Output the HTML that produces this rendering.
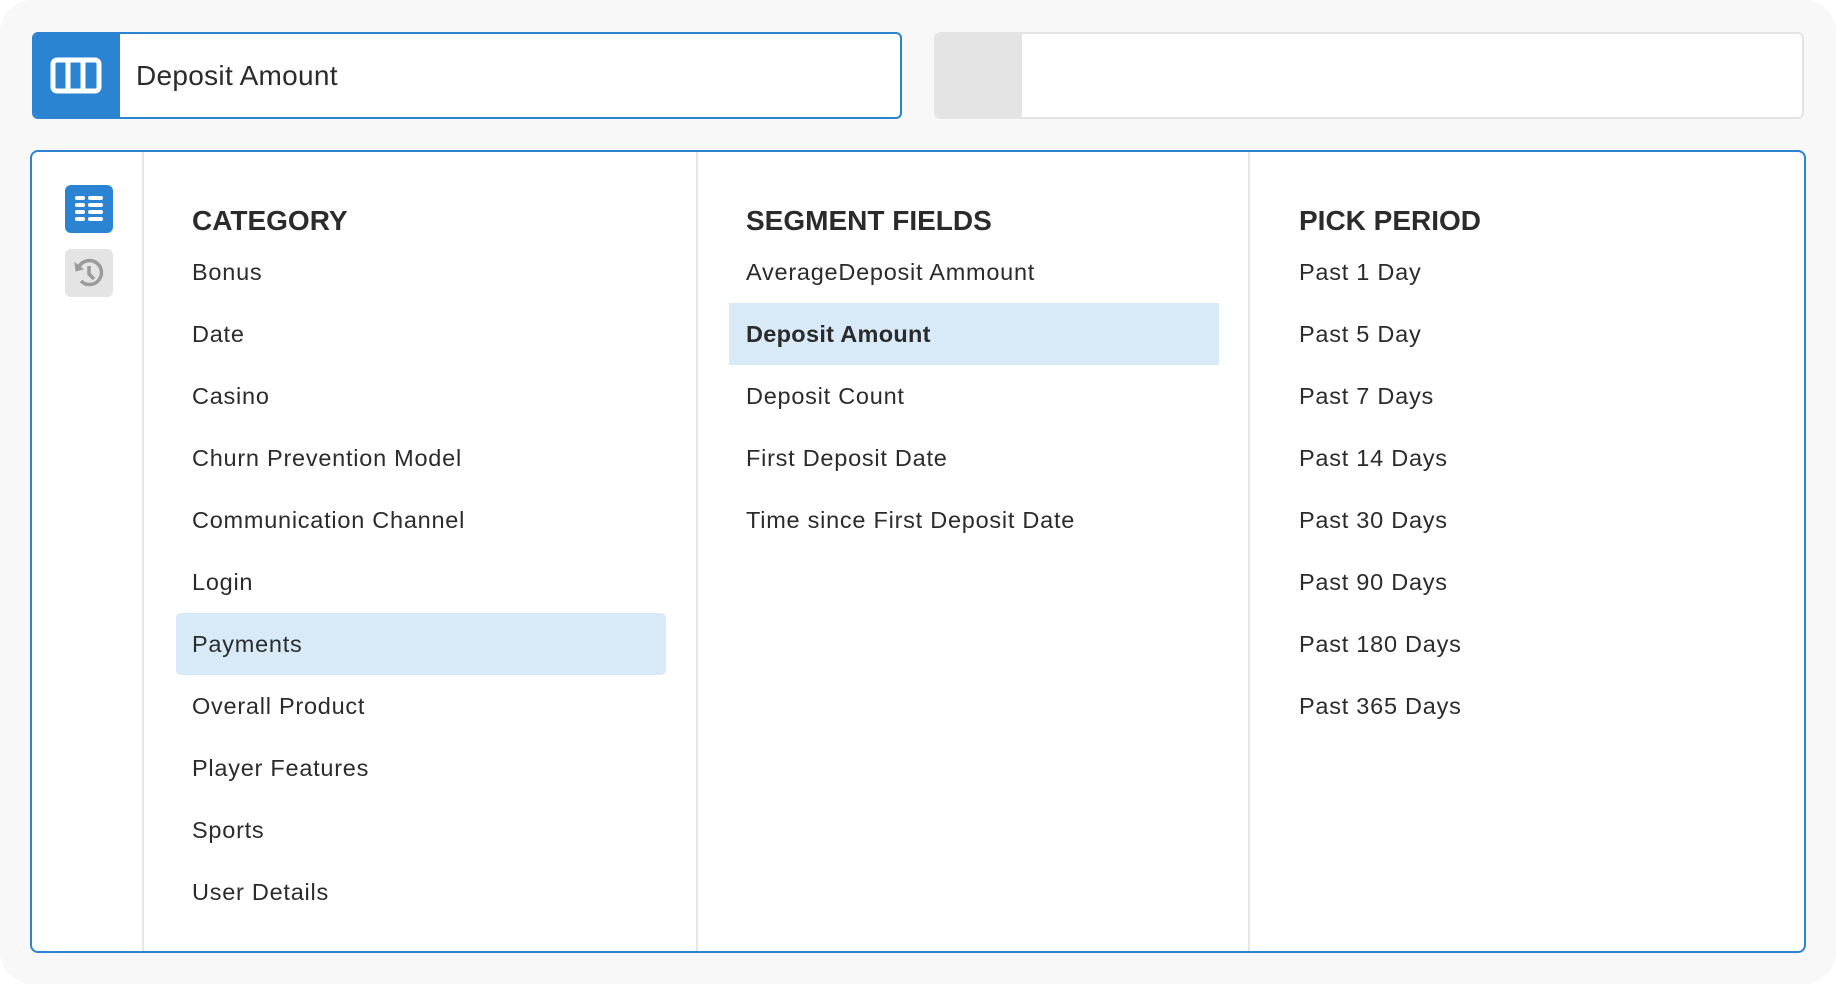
<!DOCTYPE html>
<html><head><meta charset="utf-8"><style>
*{box-sizing:border-box;margin:0;padding:0}
html,body{width:1836px;height:984px;background:#fff;overflow:hidden}
body{font-family:"Liberation Sans",sans-serif;color:#2b2b2b}
.bg{position:absolute;left:0;top:0;width:1836px;height:984px;background:#f8f8f8;border-radius:32px}
.in1{position:absolute;left:32px;top:32px;width:870px;height:87px;border:2px solid #2a84d2;border-radius:6px;background:#fff;overflow:hidden}
.in1 .ic{position:absolute;left:-2px;top:-2px;width:88px;height:87px;background:#2a84d2}
.in1 .t{position:absolute;left:102px;top:0;line-height:83px;font-size:28px;letter-spacing:0.3px}
.in2{position:absolute;left:934px;top:32px;width:870px;height:87px;border:2px solid #e4e4e4;border-radius:6px;background:#fff;overflow:hidden}
.in2 .g{position:absolute;left:-2px;top:-2px;width:88px;height:87px;background:#e4e4e4}
.panel{position:absolute;left:30px;top:150px;width:1776px;height:803px;border:2px solid #2a84d2;border-radius:8px;background:#fff}
.vd{position:absolute;top:0;bottom:0;width:2px;background:#e6e6e6}
.h{position:absolute;top:53px;font-size:28px;font-weight:bold;white-space:nowrap}
.it{position:absolute;height:62px;line-height:62px;font-size:23.5px;white-space:nowrap;letter-spacing:0.75px}
.sel{background:#d8eaf8;border-radius:5px}
.b1{position:absolute;left:33px;top:33px;width:48px;height:48px;background:#2a84d2;border-radius:6px}
.b2{position:absolute;left:33px;top:97px;width:48px;height:48px;background:#e4e4e4;border-radius:6px}
</style></head><body>
<div class="bg"></div>
<div class="in1"><div class="ic"><svg width="88" height="87"><rect x="21" y="28" width="46" height="31" rx="4" fill="none" stroke="#fff" stroke-width="5"/><line x1="36" y1="28" x2="36" y2="59" stroke="#fff" stroke-width="5"/><line x1="51" y1="28" x2="51" y2="59" stroke="#fff" stroke-width="5"/></svg></div><div class="t">Deposit Amount</div></div>
<div class="in2"><div class="g"></div></div>
<div class="panel">
<div class="b1"><svg width="48" height="48" fill="#fff"><rect x="10" y="11" width="10" height="4" rx="2"/><rect x="23" y="11" width="15" height="4" rx="2"/><rect x="10" y="18" width="10" height="4" rx="2"/><rect x="23" y="18" width="15" height="4" rx="2"/><rect x="10" y="25" width="10" height="4" rx="2"/><rect x="23" y="25" width="15" height="4" rx="2"/><rect x="10" y="32" width="10" height="4" rx="2"/><rect x="23" y="32" width="15" height="4" rx="2"/></svg></div>
<div class="b2"><svg width="48" height="48" fill="none" stroke="#9a9a9a" stroke-width="3.5"><path d="M13 20 A12 12 0 1 1 16 32"/><path d="M24 17 V25 L29 30"/><path d="M10 14 L11 22 L18 20 Z" fill="#9a9a9a" stroke-width="1"/></svg></div>
<div class="vd" style="left:110px"></div>
<div class="vd" style="left:664px"></div>
<div class="vd" style="left:1216px"></div>
<div class="h" style="left:160px">CATEGORY</div>
<div class="it" style="left:160px;top:89px">Bonus</div>
<div class="it" style="left:160px;top:151px">Date</div>
<div class="it" style="left:160px;top:213px">Casino</div>
<div class="it" style="left:160px;top:275px">Churn Prevention Model</div>
<div class="it" style="left:160px;top:337px">Communication Channel</div>
<div class="it" style="left:160px;top:399px">Login</div>
<div class="it sel" style="left:144px;top:461px;width:490px;padding-left:16px">Payments</div>
<div class="it" style="left:160px;top:523px">Overall Product</div>
<div class="it" style="left:160px;top:585px">Player Features</div>
<div class="it" style="left:160px;top:647px">Sports</div>
<div class="it" style="left:160px;top:709px">User Details</div>
<div class="h" style="left:714px">SEGMENT FIELDS</div>
<div class="it" style="left:714px;top:89px">AverageDeposit Ammount</div>
<div class="it sel" style="left:697px;top:151px;width:490px;padding-left:17px;border-radius:0;font-weight:bold;letter-spacing:0.3px">Deposit Amount</div>
<div class="it" style="left:714px;top:213px">Deposit Count</div>
<div class="it" style="left:714px;top:275px">First Deposit Date</div>
<div class="it" style="left:714px;top:337px">Time since First Deposit Date</div>
<div class="h" style="left:1267px">PICK PERIOD</div>
<div class="it" style="left:1267px;top:89px">Past 1 Day</div>
<div class="it" style="left:1267px;top:151px">Past 5 Day</div>
<div class="it" style="left:1267px;top:213px">Past 7 Days</div>
<div class="it" style="left:1267px;top:275px">Past 14 Days</div>
<div class="it" style="left:1267px;top:337px">Past 30 Days</div>
<div class="it" style="left:1267px;top:399px">Past 90 Days</div>
<div class="it" style="left:1267px;top:461px">Past 180 Days</div>
<div class="it" style="left:1267px;top:523px">Past 365 Days</div>
</div>
</body></html>
